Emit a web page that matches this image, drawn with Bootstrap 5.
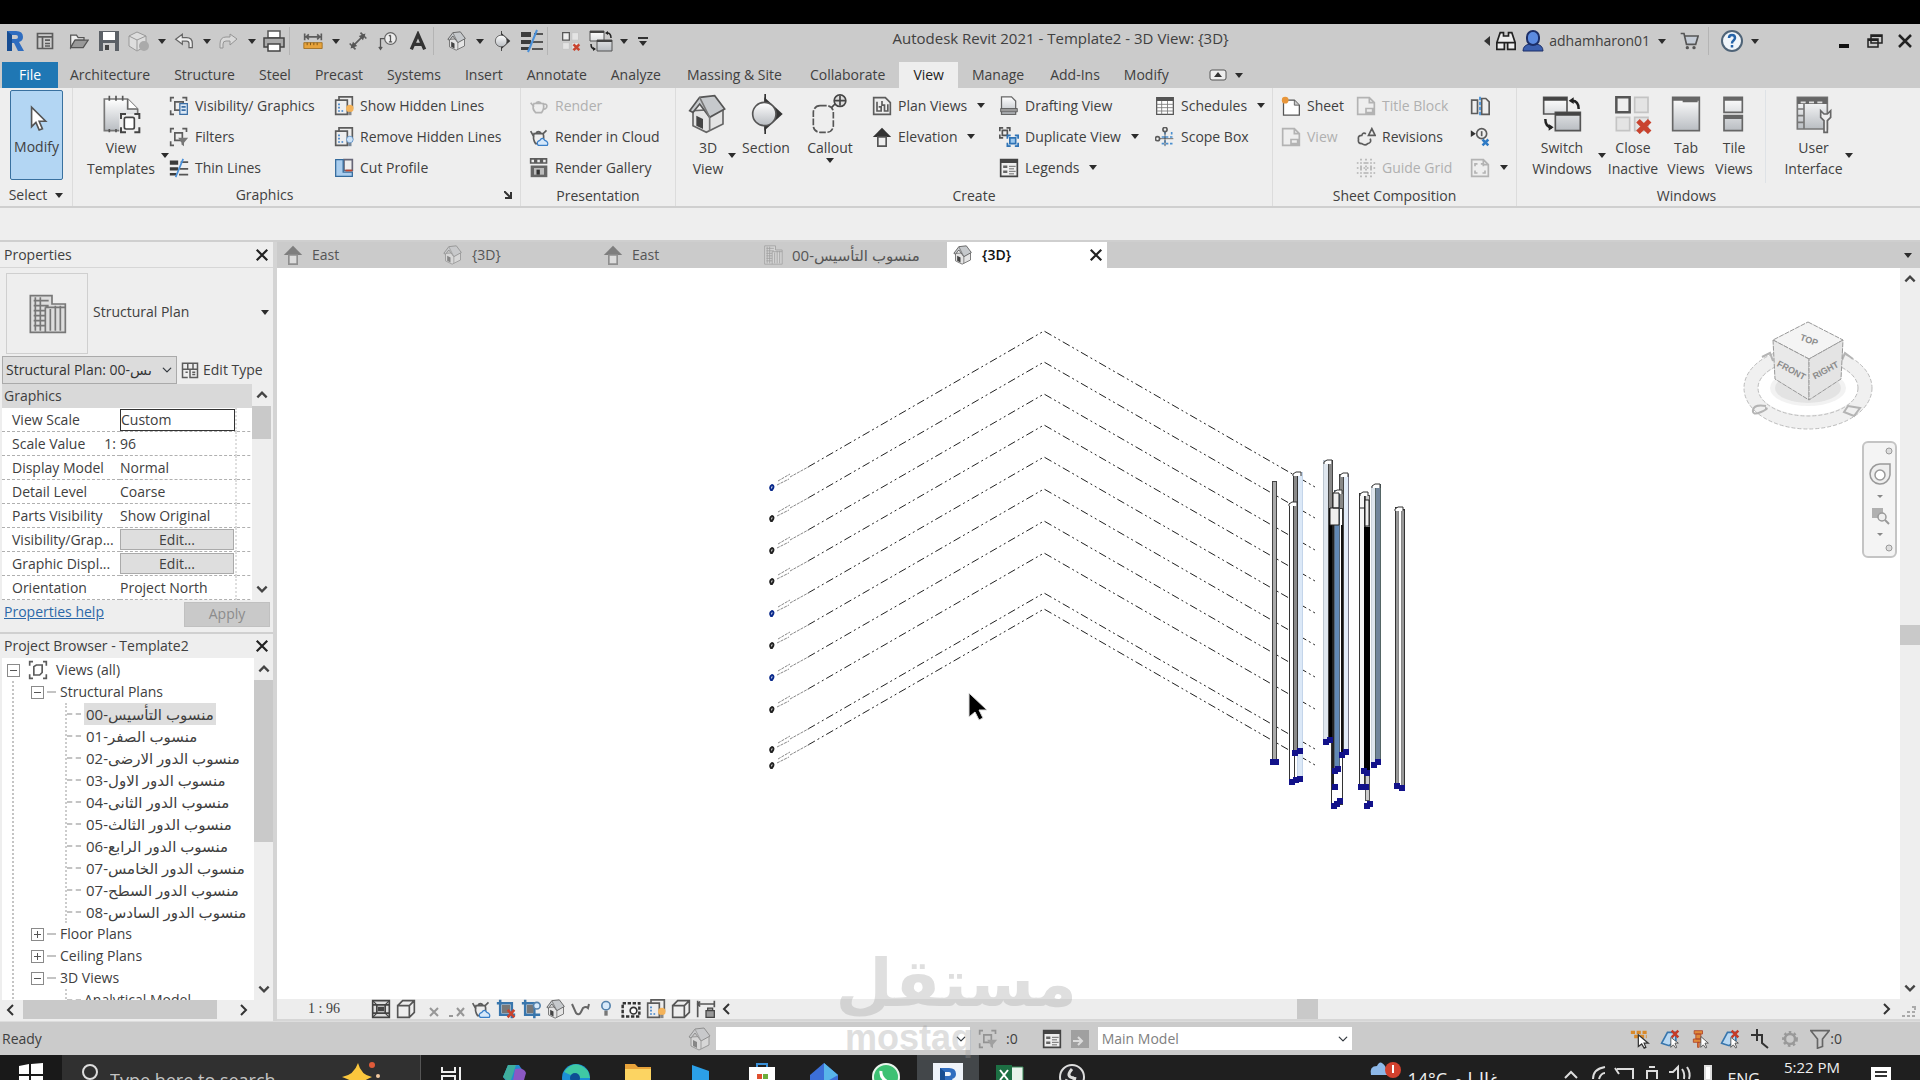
<!DOCTYPE html>
<html lang="en">
<head>
<meta charset="utf-8">
<meta name="viewport" content="width=device-width, initial-scale=1">
<title>Autodesk Revit 2021 - Template2 - 3D View: {3D}</title>
<link href="https://cdn.jsdelivr.net/npm/bootstrap@5.3.0/dist/css/bootstrap.min.css" rel="stylesheet">
<script src="https://cdn.jsdelivr.net/npm/bootstrap@5.3.0/dist/js/bootstrap.bundle.min.js"></script>
<style>
body{font:14px/20px "Open Sans","DejaVu Sans",sans-serif;color:#404040;background:#eee;overflow:hidden}
button{background:none;border:0;padding:0;color:inherit;font:inherit;line-height:inherit;white-space:nowrap}
svg{display:block;flex:none}
.app{height:100vh;padding-top:24px;background:#000}
.g{fill:none;stroke:#5c5c5c;stroke-width:2}
.i20{width:20px;height:20px}.i24{width:24px;height:24px}.i40{width:40px;height:40px}
.bar-top{background:#cbcbcb;height:38px;padding-bottom:4px}
.title-t{font-size:15px;font-weight:400;line-height:20px;padding:0 12px 6px 0}
.account{margin-right:68px}
.qb{width:30px;height:28px;display:flex;align-items:center;justify-content:center}
.qc{width:15px;display:flex;justify-content:center}
.qsep{width:9px;height:28px;border-left:1px solid #b4b4b4}
.caret-s::after{content:"";display:block;border:4px solid transparent;border-top:5px solid #2c2c2c;border-bottom:0}
.main-tabs{background:#cbcbcb;height:26px}
.main-tabs button{padding:0 12px;height:26px}
.main-tabs .roomy{padding:0 14px}
.main-tabs .file-tab{background:#1f77b4;color:#fff;width:56px;margin-left:2px}
.main-tabs .on{background:#eee;color:#222}
.ribbon{background:#eee;height:120px;border-bottom:2px solid #cfcfcf}
.pane{border-right:1px solid #dcdcdc;height:118px}
.pane-body{height:96px;padding-top:2px}
.pane-name{height:22px;line-height:24px;text-align:center}
.p-select{width:73px}.p-graphics{width:448px}.p-present{width:155px}.p-create{width:597px}.p-sheet{width:244px}.p-windows{width:339px}
.tool{height:31px;display:flex;align-items:center;gap:6px}
.tool.caret-s::after{margin-left:4px}
.off{color:#b0b0b0}.off svg{opacity:.4}
.big{display:flex;flex-direction:column;align-items:center;line-height:21px;padding-top:4px;height:93px}
.big svg{margin-bottom:3px}
.drop{position:relative}
.drop::after{content:"";position:absolute;right:-8px;top:63px;border:4px solid transparent;border-top:5px solid #2c2c2c;border-bottom:0}
.modify{width:53px;height:90px;background:#b3d6f3;border:1px solid #39719f;border-radius:2px;margin:0 10px;padding-top:12px}
.gap-band{height:34px;background:#eee;border-bottom:2px solid #cfcfcf}
.side{width:277px;background:#eee;border-right:4px solid #d4d4d4}
.side-h{height:26px;line-height:26px;padding:0 4px 0 4px;border-bottom:1px solid #d6d6d6}
.side-h.second{border-top:2px solid #d0d0d0;border-bottom:0}
.type-row{height:88px}
.pick-row{height:28px}
.type-box{width:82px;height:81px;border:1px solid #cfcfcf;margin:3px 5px 0 6px}
.type-sel{width:175px;height:28px;margin-left:2px;padding:0 22px 0 3px;border:1px solid #aaa;border-radius:0;background-color:#dcdcdc;font:inherit;color:#333;background-position:right 4px center;background-size:10px}
.props-row{height:216px}
.pgrid{width:250px;margin-left:2px;background:#fff}
.pgrid table{width:100%;table-layout:fixed;border-collapse:separate;border-spacing:0}
.pgrid td,.pgrid th{height:24px;padding:0;border-bottom:1px dashed #b0b0b0;font-weight:400;line-height:22px;white-space:nowrap;overflow:hidden}
.pgrid th{padding-left:10px;width:118px}
.pgrid td{border-right:2px dotted #dedede}
.pgrid .cat{background:#d9d9d9;height:24px;line-height:24px;padding-left:2px;border:0}
.pgrid input{width:115px;height:22px;border:1px solid #333;padding:0;background:#fff;color:#404040;font:inherit;display:block}
.edit{display:block;width:114px;height:21px;background:#dedede;border:1px solid #aaa;line-height:18px}
.sbar{width:19px;background:#eee;display:flex;flex-direction:column;align-items:center}
.sbar.wide-bar{width:20px}
.thumb{background:#c9c9c9}
.th-a{height:33px}.th-b{height:162px}.th-c{height:20px;margin-top:339px}
.th-d{width:194px;height:19px;margin-left:2px}.th-e{width:21px;height:20px;margin-left:auto;margin-right:562px}
.help-row{height:32px;padding:0 3px 4px 4px}
.help-row a{color:#2c68a8;padding-bottom:4px}
.apply{width:86px;height:25px;background:#c9c9c9;border:1px solid #c0c0c0;color:#8c8c8c}
.tree{width:252px;height:342px;margin-left:2px;background:#fff;overflow:hidden;padding-top:1px}
.tree ul{list-style:none;margin:0 0 0 51px;padding:0;border-left:2px dotted #ccc}
.tree .r{height:22px;display:flex;align-items:center;line-height:22px;white-space:nowrap}
.tree .top-r{padding-left:5px}
.tree .branch{padding-left:17px}
.tree li::before{content:"";width:14px;border-top:2px dashed #c4c4c4;margin-right:3px}
.ar{font-size:15px;direction:ltr;unicode-bidi:isolate;padding:0 2px}
.sel-node{background:#dedede}
.ex{width:13px;height:13px;border:1px solid #8a8a8a;display:inline-flex;align-items:center;justify-content:center;background:#fff}
.dash{width:9px;border-top:2px dashed #c4c4c4;margin:0 4px 0 3px}
.trunk{border-left:2px dotted #c4c4c4;margin-left:10px}
.hrow{height:19px;padding:0 24px 0 5px}
.vtabs{height:26px;background:#cbcbcb}
.vtabs button{width:160px;height:26px;display:flex;align-items:center;gap:9px;padding-left:6px;color:#555}
.vtabs .wide{width:190px}
.vtabs .on{background:#fff;color:#111;font-weight:600}
.canvas{background:#fff;position:relative;min-height:0}
.canvas>svg{width:100%;height:100%;position:absolute;inset:0}
.vbar{height:22px;background:#ededed;font-family:"Liberation Serif",serif;border-bottom:2px solid #d6d6d6;padding-left:31px}
.vicons{gap:5px;margin-left:31px}
.navtool{position:absolute;right:3px;top:173px;width:35px;height:117px;border:2px solid #c4c4c4;border-radius:6px;background:#f4f4f4}
.status{height:34px;background:#cbcbcb;border-top:1px solid #ddd}
.status .ready{width:688px;padding-left:2px}
.status select{width:254px;height:23px;border:0;border-radius:0;background-color:#fff;font:inherit;color:#808080;padding:0 4px;background-size:10px;background-position:right 4px center}
.s-right{gap:10px;margin-right:78px}
.task{background:#1f1f1f;height:25px;overflow:hidden;color:#eee}
.task button{width:62px;height:40px;display:flex;justify-content:center;padding-top:8px;flex:none}
.task .start{background:#191919}
.task .now{background:#43474a}
.task .find{width:359px;background:#303030;border-right:1px solid #555;align-items:flex-start}
.task input{background:none;border:0;color:#ccc;font-size:18px;width:210px;height:28px;padding:0;line-height:24px;margin-top:11px}
.task input::placeholder{color:#c4c4c4;opacity:1}
.tray{height:40px;margin-right:20px}
.wx{font-size:18px;line-height:20px;padding-top:14px;width:116px;white-space:nowrap}
.lang{font-size:16px;padding:14px 20px 0 4px}
.clock{width:90px;padding-top:2px;font-size:15px}
.brand{position:absolute;left:845px;top:948px;width:232px;color:#969696;opacity:.3;pointer-events:none}
.brand-ar{font:700 66px/72px "DejaVu Sans",sans-serif;height:70px;white-space:nowrap}
.brand-en{font:700 36px/40px "Liberation Sans",sans-serif}
</style>
</head>
<body>
<svg width="0" height="0" class="position-absolute">
<defs>
<linearGradient id="gr" x2="0" y2="1"><stop stop-color="#fff"/><stop offset="1" stop-color="#b9bdc2"/></linearGradient>
<symbol id="R" viewBox="0 0 24 24"><path d="M4 2h9q7 0 7 6 0 4-4 5l5 9h-6l-4-8H9v8H4zM9 6v4h4q2 0 2-2t-2-2z" fill="#2f6dc0" fill-rule="evenodd"/><path d="M4 2l5 4v16H4z" fill="#174d92"/></symbol>
<symbol id="props" viewBox="0 0 24 24"><path class="g" d="M3 3h18v18H3zM3 7h18M9 7v14M12 11h6M12 15h6M12 18h6"/></symbol>
<symbol id="etyp" viewBox="0 0 24 24"><path class="g" d="M2 3h20v8H2zM2 11v11h7M9 3v8M16 3v8M12 11h10v11H12zM15 15h4M15 18h4M6 15h3"/></symbol>
<symbol id="open" viewBox="0 0 24 24"><path d="M2 20V5h7l2 3h7v3H8z" fill="#eee" stroke="#555" stroke-width="1.5"/><path d="M2 20l5-9h16l-6 9z" fill="#999" stroke="#555" stroke-width="1.5"/></symbol>
<symbol id="save" viewBox="0 0 24 24"><path d="M2 2h20v20H2z" fill="#5b6066"/><path d="M6 3h12v8H6z" fill="#fff"/><path d="M6 14h12v8H6z" fill="#ccc"/><path d="M8 16h4v5H8z" fill="#444"/></symbol>
<symbol id="sync" viewBox="0 0 24 24"><path d="M2 7l8-4 9 4v10l-9 5-8-5z" fill="#ddd" stroke="#999"/><path d="M2 7l8 4 9-4M10 11v10" stroke="#999" fill="none"/><circle cx="17" cy="17" r="5" fill="#aaa"/></symbol>
<symbol id="undo" viewBox="0 0 24 24"><path d="M2 10l8-6v4h5q7 0 7 7v5h-4v-5q0-3-3-3h-5v4z" fill="#eee" stroke="#666" stroke-width="1.5"/></symbol>
<symbol id="print" viewBox="0 0 24 24"><path d="M6 2h12v7H6z" fill="#fff" stroke="#555" stroke-width="1.5"/><path d="M2 9h20v9H2z" fill="#aaa" stroke="#444" stroke-width="1.5"/><path d="M6 15h12v7H6z" fill="#fff" stroke="#444" stroke-width="1.5"/></symbol>
<symbol id="meas" viewBox="0 0 24 24"><path class="g" d="M2 7h20M2 3v8M22 3v8M7 4l-3 3 3 3M17 4l3 3-3 3"/><path d="M1 14h22v7H1z" fill="#e7a33c" stroke="#9c6a1c"/><path d="M5 14v3M9 14v3M13 14v3M17 14v3" stroke="#704a10"/></symbol>
<symbol id="dim" viewBox="0 0 24 24"><path class="g" d="M4 20L20 4M2 15l7 7M15 2l7 7"/><path d="M3 21l3-8 5 5zM21 3l-8 3 5 5z" fill="#555"/></symbol>
<symbol id="tag" viewBox="0 0 24 24"><circle cx="15" cy="9" r="7" fill="#eee" stroke="#666" stroke-width="1.5"/><path d="M15 5v8M13 6l2-1M13 13h4M3 21V9h5M1 19l2 3 2-3" fill="none" stroke="#555" stroke-width="1.5"/></symbol>
<symbol id="Aa" viewBox="0 0 24 24"><path d="M4 22L12 4l8 18M7 16h10" fill="none" stroke="#333" stroke-width="4"/></symbol>
<symbol id="house" viewBox="0 0 24 24"><path d="M3 10v9l8 4 10-5V9z" fill="#e4e4e4" stroke="#666"/><path d="M1 10L7 2l9-1 6 8-9 5-6-8-4 5z" fill="#c6c9cc" stroke="#555"/><path d="M7 2l6 12v8" fill="none" stroke="#777"/><path d="M5 13l4 2v6l-4-2z" fill="#444"/></symbol>
<symbol id="sect" viewBox="0 0 24 24"><path d="M11 0h1v24h-1z" fill="#333"/><path d="M11 2l11 10-11 10z" fill="#333"/><circle cx="11" cy="12" r="7" fill="url(#gr)" stroke="#555"/></symbol>
<symbol id="thin" viewBox="0 0 24 24"><path d="M1 3h10v5H1zM1 11h10v4H1zM1 18h8v3H1z" fill="#3c3c3c"/><path d="M14 5h9M13 13h10M12 20h11" stroke="#555" stroke-width="2"/><path d="M17 1L8 23" stroke="#4a90d9" stroke-width="2"/></symbol>
<symbol id="clos" viewBox="0 0 24 24"><path d="M2 2h8v9H2z" fill="#eee" stroke="#555" stroke-width="1.5"/><path d="M13 2h8v9h-8zM2 14h8v8H2zM13 14h8v8h-8z" fill="#e4e4e4" stroke="#c4c4c4"/><path d="M15 16l7 7M22 16l-7 7" stroke="#c9432e" stroke-width="3"/></symbol>
<symbol id="swit" viewBox="0 0 24 24"><path d="M1 2h14v10H1zM8 11h15v11H8z" fill="url(#gr)" stroke="#555"/><path d="M1 3h14M8 12h15" stroke="#444" stroke-width="2"/><path d="M18 4q4 0 4 5M2 15q0 5 4 5" fill="none" stroke="#222" stroke-width="1.5"/><path d="M16 4l3-2v4zM7 20l-3-2v4z" fill="#222"/></symbol>
<symbol id="tmpl" viewBox="0 0 24 24"><path d="M2 3h14l6 6v13H2z" fill="url(#gr)" stroke="#777"/><path d="M5 1v3M9 1v3M13 1v3M5 21v2M9 21v2" stroke="#555"/><path d="M16 3v6h6" fill="#fff" stroke="#666"/><path d="M11 12h12v12H11z" fill="#eee"/><path d="M12 15v-3h3M20 12h3v3M23 20v3h-3M15 23h-3v-3" fill="none" stroke="#444" stroke-width="1.2"/><rect x="14" y="14" width="6" height="7" rx="1" fill="#fff" stroke="#444"/></symbol>
<symbol id="vis" viewBox="0 0 24 24"><path class="g" d="M2 7V2h4M16 2h5v4M2 17v5h4M7 7h10v10H7z"/><path d="M13 9h9v13h-9z" fill="#dce9f6" stroke="#3a6ea5" stroke-width="1.5"/><path d="M15 13h5M15 17h5" stroke="#3a6ea5" stroke-width="2"/></symbol>
<symbol id="filt" viewBox="0 0 24 24"><path class="g" d="M2 7V2h4M16 2h5v4M2 17v5h4M7 7h9v9H7z"/><path d="M11 13h12l-5 6v4l-3-2v-2z" fill="#777"/></symbol>
<symbol id="show" viewBox="0 0 24 24"><path class="g" d="M2 5h14v17H2zM6 5V1h16v14"/><path d="M6 9v9h7" fill="none" stroke="#3a7fc8" stroke-width="2" stroke-dasharray="2 2"/><circle cx="19" cy="15" r="4.5" fill="#f4b35a"/><path d="M17 19h4v4h-4z" fill="#888"/></symbol>
<symbol id="hide" viewBox="0 0 24 24"><path class="g" d="M2 5h14v17H2zM6 5V1h16v14"/><path d="M6 9v9h7" fill="none" stroke="#3a7fc8" stroke-width="2" stroke-dasharray="2 2"/><circle cx="19" cy="15" r="4" fill="#cde2f6" stroke="#5b8fc5"/><path d="M17 19h4v4h-4z" fill="#789"/></symbol>
<symbol id="cut" viewBox="0 0 24 24"><path d="M12 2h10v13H12z" fill="#eee" stroke="#667" stroke-width="2"/><path d="M2 2h9v15h11v5H2z" fill="#a9cdee" stroke="#336a9c" stroke-width="1.5"/><path d="M14 15h8" stroke="#c0442c" stroke-width="2"/></symbol>
<symbol id="pot" viewBox="0 0 24 24"><path class="g" d="M6 9h11q2 6-2 11H8Q3 15 6 9zM8 9q3-4 7 0M6 13L2 8M17 10q6-1 4 4-1 2-4 2"/></symbol>
<symbol id="potc" viewBox="0 0 24 24"><path class="g" d="M6 8h11q2 6-2 12H8Q4 14 6 8zM8 8q3-5 7 0M6 12L2 5M17 8l4-4"/><path d="M11 22q-3-4 2-6 3-5 6 0 5 2 3 6z" fill="#d6e8fa" stroke="#3a7fc8" stroke-width="1.5"/></symbol>
<symbol id="gall" viewBox="0 0 24 24"><path d="M2 1h5v5H2zM9 1h5v5H9zM16 1h5v5h-5z" class="g"/><path d="M2 9h20v14H2z" fill="#666"/><path d="M6 12h12v8H6z" fill="#bbb"/><path d="M9 14h4v6H9z" fill="#333"/></symbol>
<symbol id="call" viewBox="0 0 24 24"><rect x="2" y="7" width="12" height="16" rx="4" fill="none" stroke="#555" stroke-dasharray="4 1"/><circle cx="18" cy="4" r="3.5" fill="#ddd" stroke="#444"/><path d="M13 8l2-2M15 4h6M18 1v6" stroke="#444"/></symbol>
<symbol id="plan" viewBox="0 0 24 24"><path class="g" d="M2 2h14l6 6v14H2zM6 7v11h5v-5h-3M12 6v5h3v7h4v-8"/></symbol>
<symbol id="elev" viewBox="0 0 24 24"><path d="M12 1L23 12H1z" fill="#333"/><path d="M7 12h10v11H7z" fill="#eee" stroke="#555" stroke-width="2"/></symbol>
<symbol id="draf" viewBox="0 0 24 24"><path d="M3 1h12l5 5v16H3z" fill="url(#gr)" stroke="#666" stroke-width="1.5"/><path d="M2 15h20v4H2z" fill="#999" stroke="#555"/></symbol>
<symbol id="dup" viewBox="0 0 24 24"><path d="M1 5V1h4M9 1h4v4M1 9v4h4M4 4h6v6H4z" fill="none" stroke="#555" stroke-width="2"/><path d="M10 14v-4h4M19 10h4v4M10 19v4h4M23 19v4h-4M13 13h7v7h-7z" fill="#9cc8ee" stroke="#2f73b5" stroke-width="2"/></symbol>
<symbol id="leg" viewBox="0 0 24 24"><path d="M2 2h20v20H2z" fill="#eee" stroke="#444" stroke-width="2"/><path d="M2 4h20" stroke="#444" stroke-width="4"/><path d="M5 9h5v3H5zM5 15h5v3H5z" fill="#666"/><path d="M12 10h8M12 13h6M12 16h8M12 19h6" stroke="#555"/></symbol>
<symbol id="dlev" viewBox="0 0 24 24"><path d="M2 2h20v20H2zM2 7h20M2 17h20M7 7v10M17 7v10" fill="#ddd" stroke="#444" stroke-width="2"/><path d="M9 10h6v4H9zM2 2l5 5M22 2l-5 5M2 22l5-5M22 22l-5-5" fill="#444" stroke="#444" stroke-width="1.5"/></symbol>
<symbol id="sch" viewBox="0 0 24 24"><path d="M2 2h20v20H2z" fill="#fff" stroke="#555" stroke-width="1.5"/><path d="M2 4h20" stroke="#555" stroke-width="4"/><path d="M2 10h20M2 14h20M2 18h20M8 6v16M15 6v16" stroke="#777"/></symbol>
<symbol id="scop" viewBox="0 0 24 24"><path d="M8 12h12v-7M12 6v16M8 20h13" fill="none" stroke="#4a8fd0" stroke-width="2" stroke-dasharray="3 2"/><circle cx="12" cy="3" r="2.5" class="g"/><circle cx="3" cy="14" r="2.5" class="g"/><path d="M12 6v17M6 14h16" stroke="#555"/></symbol>
<symbol id="shee" viewBox="0 0 24 24"><path d="M3 5h13l6 6v12H3z" fill="#fff" stroke="#555" stroke-width="1.5"/><path d="M16 5v6h6" fill="#ccc" stroke="#555"/><circle cx="5" cy="5" r="4" fill="#e8963a"/></symbol>
<symbol id="page" viewBox="0 0 24 24"><path class="g" d="M2 2h14l6 6v14H2zM16 2v6h6M12 15h8v5h-8z"/></symbol>
<symbol id="vprt" viewBox="0 0 24 24"><path class="g" d="M2 2h14l6 6v14H2zM16 2v6h6M6 10V7h3M13 7h3v3M6 15v3h3M18 15v3h-3"/></symbol>
<symbol id="rev" viewBox="0 0 24 24"><path class="g" d="M12 8q-4-2-5 2-5 0-4 5-1 5 4 5 4 3 7 0 5-1 3-6M19 2l4 8h-8z"/></symbol>
<symbol id="grid" viewBox="0 0 24 24"><path class="g" stroke-dasharray="2 2" d="M6 1v22M12 1v22M18 1v22M1 6h22M1 12h22M1 18h22"/></symbol>
<symbol id="matc" viewBox="0 0 24 24"><path class="g" d="M2 5h7v16H2zM14 3h5l4 4v15h-9z"/><path d="M12 1v22" stroke="#3a8bd8" stroke-width="2" stroke-dasharray="4 2"/></symbol>
<symbol id="refs" viewBox="0 0 24 24"><path d="M1 4l6 4-6 4z" fill="#333"/><circle cx="14" cy="8" r="6" class="g"/><path d="M14 5v6" class="g"/><path d="M15 15l7 7M22 15l-7 7" stroke="#2f7ac4" stroke-width="3"/></symbol>
<symbol id="tabv" viewBox="0 0 24 24"><rect x="4" y="2" width="16" height="20" fill="url(#gr)" stroke="#666"/><path d="M4 3h16M10 4h9" stroke="#666" stroke-width="2"/></symbol>
<symbol id="tile" viewBox="0 0 24 24"><path d="M6 2h11v9H6zM6 13h11v9H6z" fill="url(#gr)" stroke="#666"/><path d="M6 3h11M6 14h11" stroke="#666" stroke-width="2"/></symbol>
<symbol id="user" viewBox="0 0 24 24"><path d="M2 2h18v19H2z" fill="url(#gr)" stroke="#777"/><path d="M2 4h18" stroke="#666" stroke-width="4"/><path d="M4 5h3M9 5h3M14 5h3" stroke="#ddd"/><path d="M6 6v15M2 9h4M2 13h4M2 17h4" stroke="#777"/><path d="M18 23v-7l-2-2v-4l2 2h2l2-2v4l-2 2v7z" fill="#eee" stroke="#666"/></symbol>
<symbol id="bino" viewBox="0 0 24 24"><path d="M5 2h4v4h6V2h4l4 12v8h-9v-8h-4v8H1v-8zM1 14h9M14 14h9" fill="#eee" stroke="#222" stroke-width="2"/></symbol>
<symbol id="pers" viewBox="0 0 24 24"><path d="M2 22q0-6 7-7h6q7 1 7 7z" fill="#3b5fae" stroke="#1c2f68"/><rect x="6" y="2" width="12" height="14" rx="6" fill="#5c8be0" stroke="#1c2f68" stroke-width="2"/></symbol>
<symbol id="cart" viewBox="0 0 24 24"><path d="M2 3h4l3 13h11l3-10H7" fill="#c5ccd6" stroke="#555" stroke-width="2"/><circle cx="10" cy="20" r="2" fill="#555"/><circle cx="18" cy="20" r="2" fill="#555"/></symbol>
<symbol id="help" viewBox="0 0 24 24"><circle cx="12" cy="12" r="10" fill="#f0f5fa" stroke="#4e6377" stroke-width="2"/><path d="M9 9q0-3 3-3t3 3q0 1-1.5 2.5-1.5 1-1.5 3M12 16v2.5" fill="none" stroke="#2563a8" stroke-width="2.5"/></symbol>
<symbol id="x" viewBox="0 0 16 16"><path d="M2 2l12 12M14 2L2 14" stroke="#222" stroke-width="2.5"/></symbol>
<symbol id="rest" viewBox="0 0 16 16"><path d="M4 2h11v8H4zM1 6h10v8H1z" fill="#cbcbcb" stroke="#222" stroke-width="1.5"/><path d="M4 3h11M1 7h10" stroke="#222" stroke-width="2"/></symbol>
<symbol id="up" viewBox="0 0 12 12"><path d="M2 8l4-4 4 4" fill="none" stroke="#444" stroke-width="2"/></symbol>
<symbol id="dn" viewBox="0 0 12 12"><path d="M2 4l4 4 4-4" fill="none" stroke="#444" stroke-width="2"/></symbol>
<symbol id="lt" viewBox="0 0 12 12"><path d="M8 1L3 6l5 5" fill="none" stroke="#333" stroke-width="2"/></symbol>
<symbol id="rt" viewBox="0 0 12 12"><path d="M4 1l5 5-5 5" fill="none" stroke="#333" stroke-width="2"/></symbol>
<symbol id="minus" viewBox="0 0 11 11"><path d="M2 5.5h7" stroke="#555"/></symbol>
<symbol id="plus" viewBox="0 0 11 11"><path d="M2 5.5h7M5.5 2v7" stroke="#555"/></symbol>
<symbol id="bldg" viewBox="0 0 24 24"><path d="M2 1h13v5h8v17H2z" fill="#ddd" stroke="#777"/><path d="M4 4h9M4 7h9M4 10h7M4 13h7M4 16h7M4 19h7M5 2v20M8 2v20M14 9v13M17 7v15M20 7v15M11 8h12M11 8v15" stroke="#777"/></symbol>
<symbol id="cub" viewBox="0 0 24 24"><path d="M2 8h14v14H2zM2 8l6-6h14v14l-6 6M16 8l6-6" fill="#eee" stroke="#555" stroke-width="2"/></symbol>
<symbol id="dimk" viewBox="0 0 24 24"><path d="M2 2v20M22 2v8M2 6h20M5 3l-3 3 3 3" fill="none" stroke="#555" stroke-width="2"/><path d="M12 14h10v8H12zM14 14v-3h6v3" fill="#999" stroke="#444" stroke-width="1.5"/></symbol>
<symbol id="crop" viewBox="0 0 24 24"><path d="M2 5h20v16H2z" fill="#eee" stroke="#333" stroke-width="3" stroke-dasharray="4 2"/><circle cx="15" cy="14" r="4" fill="#fff" stroke="#333" stroke-width="2"/></symbol>
<symbol id="crpx" viewBox="0 0 24 24"><path d="M5 1v18h18M1 5h18v18" fill="none" stroke="#3876ad" stroke-width="3"/><path d="M7 7h10v10H7z" fill="#777"/><path d="M14 13l8 9M22 13l-8 9" stroke="#c9432e" stroke-width="3"/></symbol>
<symbol id="crpb" viewBox="0 0 24 24"><path d="M5 1v18h18M1 5h15v18" fill="none" stroke="#3876ad" stroke-width="3"/><path d="M7 7h8v10H7z" fill="#777"/><circle cx="19" cy="8" r="4" fill="#d8eafa" stroke="#5583ad" stroke-width="2"/></symbol>
<symbol id="bulb" viewBox="0 0 24 24"><circle cx="12" cy="8" r="5" fill="#d8eafa" stroke="#5583ad" stroke-width="2"/><path d="M10 14h4v6h-4z" fill="#777"/></symbol>
<symbol id="curs" viewBox="0 0 24 24"><path d="M7 2v18l4-4 3 7 3-1-3-7h6z" fill="#fff" stroke="#555" stroke-width="1.5"/></symbol>
<symbol id="gear" viewBox="0 0 24 24"><circle cx="12" cy="12" r="6" fill="none" stroke="#999" stroke-width="3"/><circle cx="12" cy="12" r="8" fill="none" stroke="#999" stroke-width="3" stroke-dasharray="3 3"/></symbol>
<symbol id="fun" viewBox="0 0 24 24"><path d="M1 2h22l-8 10v9l-6 2V12z" fill="#ccc" stroke="#666" stroke-width="2"/></symbol>
<symbol id="seal" viewBox="0 0 24 24"><path d="M1 4h20M5 9h15" fill="none" stroke="#d98a2b" stroke-width="4" stroke-dasharray="5 2"/><path d="M10 7v14l4-3 3 5 2-1-2-5h5z" fill="#fff" stroke="#333" stroke-width="1.5"/></symbol>
<symbol id="selp" viewBox="0 0 24 24"><path d="M5 2h10v4H5zM7 6h6v6H7zM4 12h12v4H4zM9 16h2v6H9z" fill="#e08a3a" stroke="#b0452a"/><path d="M13 9v13l3-3 3 4 1-1-2-5h4z" fill="#fff" stroke="#444"/></symbol>
<symbol id="selx" viewBox="0 0 24 24"><path d="M2 17L9 4h10v10l-8 6z" fill="#b9d8f2" stroke="#3876ad" stroke-width="2"/><path d="M14 2l8 8M22 2l-8 8" stroke="#c43b28" stroke-width="3"/><path d="M13 10v12l3-3 3 4 1-1-2-5h4z" fill="#fff" stroke="#444"/></symbol>
</defs>
</svg>

<div class="app d-flex flex-column">
<header class="bar-top d-flex align-items-center flex-shrink-0">
 <nav class="d-flex align-items-center">
  <button class="qb" aria-label="Revit"><svg class="i24"><use href="#R"/></svg></button><button class="qb me-1" aria-label="Properties"><svg class="i20"><use href="#props"/></svg></button><button class="qb" aria-label="Open"><svg class="i20"><use href="#open"/></svg></button><button class="qb" aria-label="Save"><svg class="i24"><use href="#save"/></svg></button><button class="qb" aria-label="Sync"><svg class="i24"><use href="#sync"/></svg></button><span class="qc caret-s"></span><button class="qb" aria-label="Undo"><svg class="i20"><use href="#undo"/></svg></button><span class="qc caret-s"></span><button class="qb off" aria-label="Redo"><svg class="i20"><path d="M18 8l-7-5v3H7Q1 6 1 13v4h3v-4q0-3 3-3h4v4z" fill="#eee" stroke="#444"/></svg></button><span class="qc caret-s"></span><button class="qb" aria-label="Print"><svg class="i24"><use href="#print"/></svg></button><span class="qsep"></span><button class="qb" aria-label="Measure"><svg class="i20"><use href="#meas"/></svg></button><span class="qc caret-s"></span><button class="qb" aria-label="Dimension"><svg class="i20"><use href="#dim"/></svg></button><button class="qb" aria-label="Tag"><svg class="i20"><use href="#tag"/></svg></button><button class="qb" aria-label="Text"><svg class="i20"><use href="#Aa"/></svg></button><span class="qsep"></span><button class="qb" aria-label="3D"><svg class="i20"><use href="#house"/></svg></button><span class="qc caret-s"></span><button class="qb" aria-label="Section"><svg class="i20"><use href="#sect"/></svg></button><button class="qb" aria-label="Thin lines"><svg class="i24"><use href="#thin"/></svg></button><span class="qsep"></span><button class="qb" aria-label="Close hidden"><svg class="i20"><use href="#clos"/></svg></button><button class="qb" aria-label="Switch windows"><svg class="i24"><use href="#swit"/></svg></button><span class="qc caret-s"></span><button class="qc flex-column align-items-center caret-s ms-1" aria-label="Customize"><svg width="10" height="4"><path d="M0 1h10" stroke="#333" stroke-width="2"/></svg></button>
 </nav>
 <h1 class="title-t m-0 flex-grow-1 text-center">Autodesk Revit 2021 - Template2 - 3D View: {3D}</h1>
 <div class="d-flex align-items-center account">
  <svg width="8" height="10"><path d="M7 0v10L1 5z" fill="#333"/></svg><button class="qb" aria-label="Search"><svg class="i20"><use href="#bino"/></svg></button><button class="d-flex align-items-center gap-1 caret-s"><svg class="i24"><use href="#pers"/></svg><span class="me-1">adhamharon01</span></button><button class="qb ms-2" aria-label="Store"><svg class="i20"><use href="#cart"/></svg></button><span class="qsep ms-1"></span><button class="qb" aria-label="Help"><svg class="i24"><use href="#help"/></svg></button><span class="qc caret-s"></span>
 </div>
 <div class="d-flex align-items-center"><button class="qb" aria-label="Minimize"><svg width="12" height="16"><path d="M0 13h10" stroke="#111" stroke-width="4"/></svg></button><button class="qb" aria-label="Restore"><svg width="16" height="16"><use href="#rest"/></svg></button><button class="qb" aria-label="Close"><svg width="16" height="16"><use href="#x"/></svg></button></div>
</header>
<nav class="main-tabs d-flex flex-shrink-0 align-items-center">
 <button class="file-tab">File</button><button>Architecture</button><button>Structure</button><button>Steel</button><button>Precast</button><button>Systems</button><button>Insert</button><button>Annotate</button><button>Analyze</button><button class="roomy">Massing &amp; Site</button><button class="roomy">Collaborate</button><button class="roomy on">View</button><button class="roomy">Manage</button><button>Add-Ins</button><button>Modify</button><button class="d-flex align-items-center gap-2 caret-s ms-3" aria-label="Ribbon display"><svg width="18" height="12"><rect x="1" y="1" width="16" height="10" rx="2" fill="#eee" stroke="#555"/><path d="M5 8l4-5 4 5z" fill="#333"/></svg></button>
</nav>
<section class="ribbon d-flex flex-shrink-0">
 <div class="pane p-select"><div class="pane-body"><button class="big modify"><svg width="26" height="30" viewBox="0 0 24 24"><use href="#curs"/></svg>Modify</button></div><div class="pane-name d-flex justify-content-center align-items-center gap-2 caret-s">Select</div></div>
 <div class="pane p-graphics"><div class="pane-body d-flex">
  <button class="big drop" style="width:80px;margin-left:8px"><svg class="i40"><use href="#tmpl"/></svg><span>View</span><span>Templates</span></button>
  <div style="width:165px;margin-left:8px"><button class="tool"><svg class="i20"><use href="#vis"/></svg>Visibility/ Graphics</button><button class="tool"><svg class="i20"><use href="#filt"/></svg>Filters</button><button class="tool"><svg class="i20"><use href="#thin"/></svg>Thin Lines</button></div>
  <div><button class="tool"><svg class="i20"><use href="#show"/></svg>Show Hidden Lines</button><button class="tool"><svg class="i20"><use href="#hide"/></svg>Remove Hidden Lines</button><button class="tool"><svg class="i20"><use href="#cut"/></svg>Cut Profile</button></div>
 </div><div class="pane-name d-flex align-items-center"><span class="flex-grow-1 pe-5">Graphics</span><svg width="8" height="8" class="me-2"><path d="M0 0l6 6M7 1v6H1" stroke="#333" stroke-width="2" fill="none"/></svg></div></div>
 <div class="pane p-present"><div class="pane-body ps-2"><button class="tool off"><svg class="i20"><use href="#pot"/></svg>Render</button><button class="tool"><svg class="i20"><use href="#potc"/></svg>Render in Cloud</button><button class="tool"><svg class="i20"><use href="#gall"/></svg>Render Gallery</button></div><div class="pane-name">Presentation</div></div>
 <div class="pane p-create"><div class="pane-body d-flex">
  <button class="big drop" style="width:40px;margin-left:12px"><svg class="i40"><use href="#house"/></svg><span>3D</span><span>View</span></button>
  <button class="big" style="width:60px;margin-left:8px"><svg class="i40"><use href="#sect"/></svg>Section</button>
  <button class="big caret-s" style="width:60px;margin:0 12px 0 4px"><svg class="i40"><use href="#call"/></svg>Callout</button>
  <div style="width:127px"><button class="tool caret-s"><svg class="i20"><use href="#plan"/></svg>Plan Views</button><button class="tool caret-s"><svg class="i20"><use href="#elev"/></svg>Elevation</button></div>
  <div style="width:156px"><button class="tool"><svg class="i20"><use href="#draf"/></svg>Drafting View</button><button class="tool caret-s"><svg class="i20"><use href="#dup"/></svg>Duplicate View</button><button class="tool caret-s"><svg class="i20"><use href="#leg"/></svg>Legends</button></div>
  <div><button class="tool caret-s"><svg class="i20"><use href="#sch"/></svg>Schedules</button><button class="tool"><svg class="i20"><use href="#scop"/></svg>Scope Box</button></div>
 </div><div class="pane-name">Create</div></div>
 <div class="pane p-sheet"><div class="pane-body d-flex ps-2">
  <div style="width:75px"><button class="tool"><svg class="i20"><use href="#shee"/></svg>Sheet</button><button class="tool off"><svg class="i20"><use href="#page"/></svg>View</button></div>
  <div style="width:114px"><button class="tool off"><svg class="i20"><use href="#page"/></svg>Title Block</button><button class="tool"><svg class="i20"><use href="#rev"/></svg>Revisions</button><button class="tool off"><svg class="i20"><use href="#grid"/></svg>Guide Grid</button></div>
  <div><button class="tool" aria-label="Matchline"><svg class="i20"><use href="#matc"/></svg></button><button class="tool" aria-label="View reference"><svg class="i20"><use href="#refs"/></svg></button><button class="tool off caret-s" aria-label="Viewports"><svg class="i20"><use href="#vprt"/></svg></button></div>
 </div><div class="pane-name">Sheet Composition</div></div>
 <div class="pane border-0 p-windows"><div class="pane-body d-flex">
  <button class="big drop" style="width:72px;margin-left:9px"><svg class="i40"><use href="#swit"/></svg><span>Switch</span><span>Windows</span></button>
  <button class="big" style="width:58px;margin-left:6px"><svg class="i40"><use href="#clos"/></svg><span>Close</span><span>Inactive</span></button>
  <button class="big" style="width:48px"><svg class="i40"><use href="#tabv"/></svg><span>Tab</span><span>Views</span></button>
  <button class="big" style="width:48px"><svg class="i40"><use href="#tile"/></svg><span>Tile</span><span>Views</span></button>
  <button class="big drop border-start ps-3" style="width:80px;margin-left:7px"><svg class="i40"><use href="#user"/></svg><span>User</span><span>Interface</span></button>
 </div><div class="pane-name">Windows</div></div>
</section>
<div class="gap-band flex-shrink-0"></div>

<main class="d-flex flex-grow-1" style="min-height:0">
<aside class="side flex-shrink-0">
 <div class="side-h d-flex justify-content-between align-items-center">Properties<button aria-label="Close properties"><svg width="14" height="14"><use href="#x"/></svg></button></div>
 <div class="d-flex align-items-center type-row"><div class="type-box d-flex align-items-center justify-content-center"><svg class="i40"><use href="#bldg"/></svg></div><span class="flex-grow-1">Structural Plan</span><span class="caret-s pe-1"></span></div>
 <div class="d-flex align-items-center pick-row"><select class="type-sel form-select" aria-label="Type"><option>Structural Plan: 00-ىس</option></select><button class="d-flex align-items-center ms-1 gap-1"><svg width="18" height="18"><use href="#etyp"/></svg>Edit Type</button></div>
 <div class="d-flex props-row">
  <div class="pgrid overflow-hidden"><table>
   <colgroup><col style="width:118px"><col style="width:117px"><col></colgroup>
   <tr><th colspan="3" class="cat"><span class="d-flex justify-content-between align-items-center pe-1">Graphics<svg width="10" height="12"><path d="M2 5l3-3 3 3M2 10l3-3 3 3" fill="none" stroke="#333" stroke-width="1.5"/></svg></span></th></tr>
   <tr><th><label for="vs">View Scale</label></th><td><input id="vs" value="Custom"></td><td></td></tr>
   <tr><th><span class="d-flex justify-content-between pe-1">Scale Value<span>1:</span></span></th><td>96</td><td></td></tr>
   <tr><th>Display Model</th><td>Normal</td><td></td></tr>
   <tr><th>Detail Level</th><td>Coarse</td><td></td></tr>
   <tr><th>Parts Visibility</th><td>Show Original</td><td></td></tr>
   <tr><th>Visibility/Grap...</th><td><button class="edit">Edit...</button></td><td></td></tr>
   <tr><th>Graphic Displ...</th><td><button class="edit">Edit...</button></td><td></td></tr>
   <tr><th>Orientation</th><td>Project North</td><td></td></tr>
  </table></div>
  <div class="sbar py-1"><svg width="14" height="14"><use href="#up"/></svg><div class="thumb th-a w-100 mt-1"></div><svg width="14" height="14" class="mt-auto"><use href="#dn"/></svg></div>
 </div>
 <div class="d-flex justify-content-between align-items-center help-row"><a href="#">Properties help</a><button class="apply" disabled>Apply</button></div>
 <div class="side-h second d-flex justify-content-between align-items-center">Project Browser - Template2<button aria-label="Close browser"><svg width="14" height="14"><use href="#x"/></svg></button></div>
 <div class="d-flex">
  <div class="tree">
   <div class="r top-r"><span class="ex"><svg width="11" height="11"><use href="#minus"/></svg></span><svg width="20" height="20" class="mx-2" viewBox="0 0 24 24"><path class="g" d="M2 7V2h4M18 2h4v5M2 17v5h4M22 17v5h-4M7 8l3-2h7v9l-3 3H7z"/></svg><span>Views (all)</span></div>
   <div class="trunk"><div class="r branch"><span class="ex"><svg width="11" height="11"><use href="#minus"/></svg></span><span class="dash"></span>Structural Plans</div>
   <ul>
    <li class="r"><span class="ar sel-node">00-منسوب التأسيس</span></li><li class="r"><span class="ar">01-منسوب الصفر</span></li><li class="r"><span class="ar">02-منسوب الدور الارضى</span></li><li class="r"><span class="ar">03-منسوب الدور الاول</span></li><li class="r"><span class="ar">04-منسوب الدور الثانى</span></li><li class="r"><span class="ar">05-منسوب الدور الثالث</span></li><li class="r"><span class="ar">06-منسوب الدور الرابع</span></li><li class="r"><span class="ar">07-منسوب الدور الخامس</span></li><li class="r"><span class="ar">07-منسوب الدور السطح</span></li><li class="r"><span class="ar">08-منسوب الدور السادس</span></li>
   </ul>
   <div class="r branch"><span class="ex"><svg width="11" height="11"><use href="#plus"/></svg></span><span class="dash"></span>Floor Plans</div>
   <div class="r branch"><span class="ex"><svg width="11" height="11"><use href="#plus"/></svg></span><span class="dash"></span>Ceiling Plans</div>
   <div class="r branch"><span class="ex"><svg width="11" height="11"><use href="#minus"/></svg></span><span class="dash"></span>3D Views</div>
   <ul><li class="r"><span>Analytical Model</span></li></ul></div>
  </div>
  <div class="sbar pt-1"><svg width="14" height="14"><use href="#up"/></svg><div class="thumb th-b w-100 mt-1"></div><svg width="14" height="14" class="mt-auto mb-1"><use href="#dn"/></svg></div>
 </div>
 <div class="d-flex align-items-center hrow"><svg width="12" height="12" class="me-1"><use href="#lt"/></svg><div class="thumb th-d"></div><svg width="12" height="12" class="ms-auto"><use href="#rt"/></svg></div>
</aside>

<section class="flex-grow-1 d-flex flex-column" style="min-width:0">
 <div class="vtabs d-flex align-items-center flex-shrink-0"><button><svg class="i20 opacity-50"><use href="#elev"/></svg>East</button><button><svg class="i20 opacity-50"><use href="#house"/></svg>{3D}</button><button><svg class="i20 opacity-50"><use href="#elev"/></svg>East</button><button class="wide"><svg class="i20 opacity-50"><use href="#bldg"/></svg><span class="ar p-0">00-منسوب التأسيس</span></button><button class="on pe-1"><svg class="i20"><use href="#house"/></svg>{3D}<svg width="14" height="14" class="ms-auto"><use href="#x"/></svg></button><span class="caret-s ms-auto me-2"></span></div>
 <div class="d-flex flex-grow-1" style="min-height:0">
  <div class="canvas flex-grow-1">
   <svg viewBox="277 268 1623 731" id="scene"></svg>
   <div class="navtool d-flex flex-column align-items-center justify-content-between py-1">
    <svg width="31" height="8"><circle cx="25" cy="4" r="3" fill="#ddd" stroke="#999"/></svg>
    <button aria-label="Wheel"><svg width="26" height="26"><path d="M13 2h10v11a10 10 0 1 1-10-11z" fill="#eee" stroke="#999" stroke-width="1.5"/><circle cx="13" cy="13" r="5" fill="#fff" stroke="#999" stroke-width="1.5"/></svg></button>
    <svg width="8" height="4"><path d="M1 0h6L4 3z" fill="#888"/></svg>
    <button aria-label="Zoom"><svg width="20" height="20"><path d="M2 2h11v10H2z" fill="#b0b0b0"/><circle cx="12" cy="11" r="4" fill="#eee" stroke="#999" stroke-width="1.5"/><path d="M15 14l4 4" stroke="#999" stroke-width="2"/></svg></button>
    <svg width="8" height="4"><path d="M1 0h6L4 3z" fill="#888"/></svg>
    <svg width="31" height="8"><circle cx="25" cy="4" r="3" fill="#ddd" stroke="#999"/></svg>
   </div>
  </div>
  <div class="sbar wide-bar py-1"><svg width="14" height="14"><use href="#up"/></svg><div class="thumb th-c w-100"></div><svg width="14" height="14" class="mt-auto"><use href="#dn"/></svg></div>
 </div>
 <div class="vbar d-flex align-items-center flex-shrink-0"><span>1 : 96</span>
  <div class="d-flex align-items-center vicons"><svg class="i20"><use href="#dlev"/></svg><svg class="i20"><use href="#cub"/></svg><svg class="i20 opacity-50"><path d="M9 9l8 8M17 9l-8 8" stroke="#444" stroke-width="2"/></svg><svg class="i20 opacity-50"><path d="M3 17h4M11 9l7 8M18 9l-7 8" stroke="#444" stroke-width="2"/></svg><svg class="i20"><use href="#potc"/></svg><svg class="i20"><use href="#crpx"/></svg><svg class="i20"><use href="#crpb"/></svg><svg class="i20"><use href="#house"/></svg><svg class="i20"><path d="M1 5l4 9q3 3 5-1l2-4q3-2 5 0l1-4" fill="none" stroke="#666" stroke-width="2"/></svg><svg class="i20"><use href="#bulb"/></svg><svg class="i20"><use href="#crop"/></svg><svg class="i20"><use href="#show"/></svg><svg class="i20"><use href="#cub"/></svg><svg class="i20"><use href="#dimk"/></svg><svg width="12" height="12"><use href="#lt"/></svg></div>
  <div class="thumb th-e"></div><svg width="12" height="12"><use href="#rt"/></svg><svg width="20" height="16" class="ms-2"><path d="M12 6h3v3M7 11h3M12 11h3M2 15h3M7 15h3M12 15h3" stroke="#aaa" stroke-width="2" fill="none"/></svg>
 </div>
</section>
</main>

<footer class="status d-flex align-items-center flex-shrink-0">
 <span class="ready">Ready</span><svg class="i24 me-1 opacity-50"><use href="#house"/></svg><select class="form-select" aria-label="Workset"><option></option></select><svg class="i20 ms-2 opacity-50"><use href="#filt"/></svg><span class="ms-2">:0</span><svg class="i20 ms-4"><use href="#leg"/></svg><svg class="i20 ms-2 opacity-50"><path d="M1 1h18v18H1z" fill="#777"/><path d="M3 12h8M8 8l4 4-4 4" stroke="#eee" stroke-width="2" fill="none"/></svg><select class="form-select ms-2" aria-label="Design option"><option>Main Model</option></select>
 <div class="d-flex align-items-center ms-auto s-right"><svg class="i20"><use href="#seal"/></svg><svg class="i20"><use href="#selx"/></svg><svg class="i20"><use href="#selp"/></svg><svg class="i20"><use href="#selx"/></svg><svg class="i20"><path d="M1 6h12M7 0v12M12 6v8l6 5" fill="none" stroke="#333" stroke-width="2"/></svg><svg class="i20"><use href="#gear"/></svg><span class="d-flex align-items-center"><svg class="i20"><use href="#fun"/></svg>:0</span></div>
</footer>
<footer class="task d-flex flex-shrink-0">
 <button aria-label="Start" class="start"><svg width="24" height="24"><path d="M0 3l10-2v10H0zM12 1l12-1v11H12zM0 13h10v9H0zM12 13h12v10H12z" fill="#fff"/></svg></button>
 <div class="find d-flex flex-shrink-0"><svg width="24" height="24" class="mt-2 ms-3"><circle cx="12" cy="9" r="7" fill="none" stroke="#ddd" stroke-width="2"/></svg><input class="ms-2" aria-label="Search" placeholder="Type here to search"><svg width="60" height="30" class="ms-3 mt-1"><path d="M22 4q3 12 14 14-11 4-14 12Q19 22 6 18 18 16 22 4z" fill="#fbc73d"/><circle cx="36" cy="6" r="3" fill="#e05b3a"/><circle cx="42" cy="17" r="2" fill="#f3c9a0"/></svg></div>
 <button aria-label="Task view"><svg width="24" height="24"><path d="M2 4v5h13V4M2 13h13v9H2zM20 4v16" fill="none" stroke="#eee" stroke-width="2"/></svg></button>
 <button aria-label="Copilot"><svg width="26" height="26"><path d="M7 2h11l4 6-3 14H8L2 14z" fill="#238bd0"/><path d="M14 6q9-2 11 4l-4 14H11z" fill="#8b58c4"/><path d="M7 2h8L9 20 2 14z" fill="#3fae9d"/></svg></button>
 <button aria-label="Edge"><svg width="30" height="30"><circle cx="15" cy="15" r="14" fill="#1b8fd6"/><path d="M3 9Q14-6 27 8l2 7H16z" fill="#3fc9a4"/><circle cx="14" cy="15" r="5" fill="#0d4f94"/></svg></button>
 <button aria-label="Explorer"><svg width="28" height="28"><path d="M1 4V1h10l3 3h13v20H1z" fill="#e8a33a"/><path d="M1 6h26v20H1z" fill="#fcd462"/></svg></button>
 <button aria-label="Code"><svg width="28" height="28"><path d="M6 2l17 6v16L6 20z" fill="#2ba0e8"/></svg></button>
 <button aria-label="Store"><svg width="28" height="28"><path d="M9 6V1h10v5" fill="none" stroke="#3a90d8" stroke-width="2"/><path d="M1 4h26v20H1z" fill="#fff"/><path d="M9 11h5v5H9z" fill="#e05030"/><path d="M15 11h5v5h-5z" fill="#6cae3c"/></svg></button>
 <button aria-label="App"><svg width="30" height="28"><path d="M15 0l14 12v14H1V12z" fill="#3c6fd8"/><path d="M15 0l14 12-14 8z" fill="#58b5ea"/></svg></button>
 <button aria-label="WhatsApp"><svg width="28" height="28"><circle cx="14" cy="14" r="13" fill="#3dc173" stroke="#e8f5ec" stroke-width="2"/><path d="M9 8q-1 8 9 12" stroke="#fff" stroke-width="3" fill="none"/></svg></button>
 <button aria-label="Revit" class="now"><svg width="30" height="30"><path d="M0 0h30v30H0z" fill="#eef3fa"/><use href="#R" x="3" y="3" width="24" height="24"/></svg></button>
 <button aria-label="Excel"><svg width="28" height="28"><path d="M10 4h17v22H10z" fill="#e8f3ec" stroke="#3a8a5a"/><path d="M0 2h16v20H0z" fill="#1d7044"/><path d="M4 7l8 10M12 7L4 17" stroke="#fff" stroke-width="2"/></svg></button>
 <button aria-label="OBS"><svg width="28" height="28"><circle cx="14" cy="14" r="12" fill="#26262a" stroke="#ddd" stroke-width="2"/><path d="M14 6q-7 8 2 9M7 17q9 5 10-3" stroke="#ddd" stroke-width="3" fill="none"/></svg></button>
 <div class="d-flex ms-auto tray">
  <svg width="34" height="25"><path d="M2 20q-2-9 6-9 3-7 8 0l4 9z" fill="#8db8e8"/><circle cx="24" cy="15" r="8" fill="#d2412e"/><path d="M24 10v8" stroke="#fff" stroke-width="2"/></svg><span class="ms-1 wx">14°C غالبا م...</span>
  <svg width="176" height="25" class="ms-4" fill="none" stroke="#ddd" stroke-width="2"><path d="M18 23l6-6 6 6M46 24q0-10 12-12M52 24q2-6 6-6M70 14h16v10M68 13l4 6M100 24v-8h10v8M102 12h6M122 17h4l5-5v12M135 14q3 4 2 10M140 12q4 6 2 12"/><rect x="158" y="11" width="6" height="14" fill="#fff"/></svg>
  <span class="lang">ENG</span><span class="clock ps-1">5:22 PM</span><svg width="22" height="25" class="me-2"><path d="M1 12h20v13H1z" fill="#fff"/><path d="M5 17h12M5 21h12" stroke="#333" stroke-width="2"/></svg>
 </div>
</footer>
</div>
<div class="brand"><div class="brand-ar" dir="rtl">مستقل</div><div class="brand-en">mostaq</div></div>
<script>
// Builds the 3D scene: level lines, structural columns and the view cube.
const levels=[331,362,394,425,457,489,521,553,593,609];
let s='';
levels.forEach((y,k)=>{
 s+=`<path d="M808 ${y+136}L1044 ${y}L1315 ${y+156}" fill="none" stroke="#222" stroke-dasharray="8 3 2 3 2 3"/>`;
 s+=`<path d="M777 ${y+154}l12-6M778 ${y+150}l12-7M790 ${y+146}l20-11" stroke="#888" stroke-dasharray="3 1"/>`;
 s+=`<path d="M771 ${y+159}q-2-3 1-5 3 1 0 5z" fill="none" stroke="${[0,4,6].includes(k)?'#0a2a8c':'#222'}" stroke-width="2"/>`;
});
// x, top, width, bottom, fill, outline
const cols=[[1272,481,4,760,'#aaa','#444'],[1289,503,5,782,'#fff','#333'],[1297,472,5,777,'#dbe8f7','#c4d5ea'],[1293,474,4,752,'#8a8a8a','#333'],
[1323,460,5,740,'#dfe6ee','#bcc6d0'],[1328,460,4,740,'#888','#444'],[1343,474,5,752,'#e2ecf9','#778'],[1339,474,4,752,'#888','#444'],[1331,508,11,804,'#fff','#333'],[1329,508,3,738,'#000','#000'],[1334,490,5,770,'#6188b4','#567'],[1332,508,1,786,'#222','#222'],[1341,525,1,754,'#111','#111'],
[1359,493,5,787,'#f5f5f5','#333'],[1365,495,4,800,'#ccc','#555'],[1364,527,5,770,'#000','#000'],[1371,486,4,763,'#dfe6ee','#ccd4dc'],[1375,484,5,763,'#70849a','#566'],
[1395,507,3,787,'#999','#333'],[1401,509,3,788,'#999','#333'],[1398,508,3,787,'#fff','#888']];
cols.forEach(c=>s+=`<rect x="${c[0]}.5" y="${c[1]}.5" width="${c[2]}" height="${c[3]-c[1]}" fill="${c[4]}" stroke="${c[5]}"/>`);
[[1293,472],[1324,460],[1340,473],[1334,490],[1360,492],[1372,484],[1395,507],[1289,502]].forEach(p=>s+=`<path d="M${p[0]} ${p[1]+4}v-2l3-2h5v4" fill="#fff" stroke="#333"/>`);
s+=`<path d="M1333 493h6v15h-6zM1330 508h9v17h-9zM1360 508h5M1365 500h4v26h-4z" fill="#eee" stroke="#222"/>`;
[[1270,759],[1273,759],[1292,750],[1297,748],[1289,779],[1293,777],[1297,776],[1323,739],[1327,737],[1339,752],[1343,749],[1332,768],[1335,766],[1331,803],[1334,801],[1337,798],[1361,768],[1364,770],[1358,784],[1363,784],[1364,803],[1367,801],[1371,762],[1375,759],[1394,783],[1399,785],[1332,784]].forEach(p=>s+=`<rect x="${p[0]}" y="${p[1]}" width="6" height="6" fill="#12128a"/>`);
s+=`<ellipse cx="1808" cy="388" rx="57" ry="34" fill="none" stroke="#f0f0f0" stroke-width="14"/>
<g fill="none" stroke="#bcbcbc" stroke-dasharray="4 2"><ellipse cx="1808" cy="388" rx="64" ry="41"/><ellipse cx="1808" cy="388" rx="50" ry="28"/></g>
<g fill="#ccc"><ellipse cx="1808" cy="388" rx="38" ry="18" opacity=".25"/><ellipse cx="1808" cy="388" rx="33" ry="15" opacity=".4"/></g>
<g fill="none" stroke="#b4b4b4" stroke-width="2"><path d="M1766 406q-12-2-13 4t8 2 4-4M1848 406l12 2-6 8-10-4zM1762 357l8-4 3 8M1842 360l3-7 8 6"/></g>
<g stroke="#999" stroke-dasharray="5 1"><path d="M1808 322L1843 340 1809 359 1773 340z" fill="#f4f4f4"/><path d="M1773 340L1809 359V400L1775 379z" fill="#e9e9e9"/><path d="M1843 340L1809 359V400L1841 379z" fill="#e4e4e4"/></g>
<g font-family="Liberation Sans" font-weight="700" font-size="9" fill="#8c8c8c" text-anchor="middle"><text transform="translate(1808 343) rotate(20)">TOP</text><text transform="translate(1790 373) rotate(28)">FRONT</text><text transform="translate(1827 373) rotate(-28)">RIGHT</text></g>
<path d="M969 693v24l6-5 4 8 4-2-4-8h8z" fill="#000" stroke="#ddd"/>`;
document.getElementById('scene').innerHTML=s;
</script>
</body>
</html>
